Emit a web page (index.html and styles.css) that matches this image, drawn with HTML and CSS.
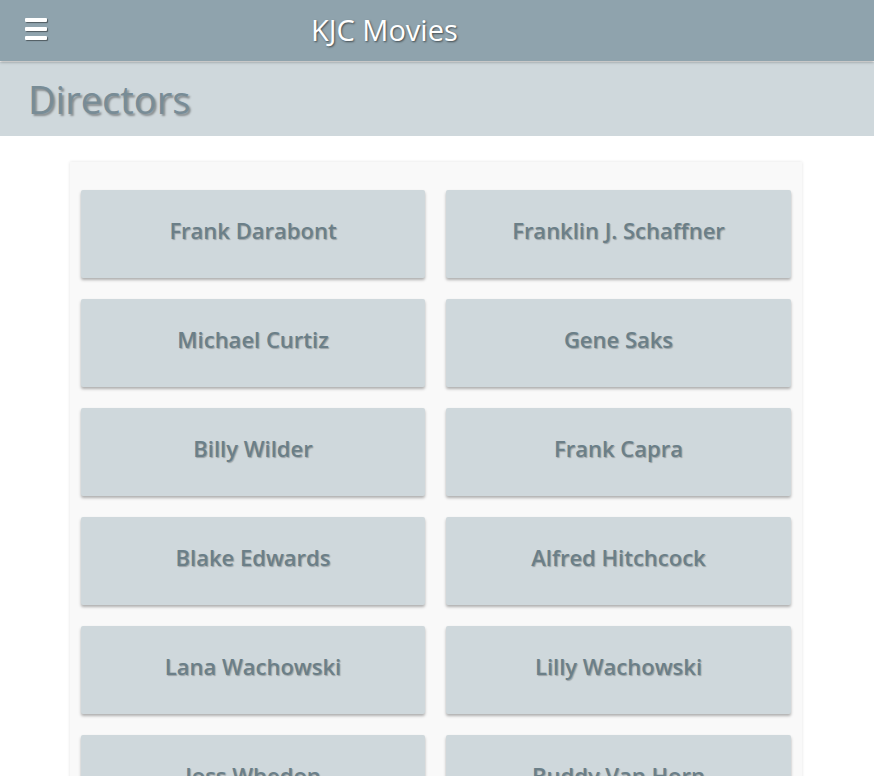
FILE: index.html
```html
<!DOCTYPE html>
<html lang="en">
<head>
<meta charset="utf-8">
<title>KJC Movies - Directors</title>
<link rel="stylesheet" href="styles.css">
</head>
<body>
<header class="topbar">
  <button class="menu" aria-label="Menu">
    <span class="bar"></span><span class="bar"></span><span class="bar"></span>
  </button>
  <div class="brand">KJC Movies</div>
</header>
<section class="subheader">
  <h1 class="page-title">Directors</h1>
</section>
<main class="panel">
  <div class="card">Frank Darabont</div>
  <div class="card">Franklin J. Schaffner</div>
  <div class="card">Michael Curtiz</div>
  <div class="card">Gene Saks</div>
  <div class="card">Billy Wilder</div>
  <div class="card">Frank Capra</div>
  <div class="card">Blake Edwards</div>
  <div class="card">Alfred Hitchcock</div>
  <div class="card">Lana Wachowski</div>
  <div class="card">Lilly Wachowski</div>
  <div class="card">Joss Whedon</div>
  <div class="card">Buddy Van Horn</div>
</main>
</body>
</html>
```
FILE: styles.css
```css
* { box-sizing: border-box; }
html, body { margin: 0; padding: 0; }
body {
  background: #ffffff;
  font-family: "Open Sans", "Noto Sans", sans-serif;
  overflow: hidden;
}
.topbar {
  height: 61px;
  background: #8fa3ad;
  display: flex;
  align-items: center;
  box-shadow: 0 1px 3px rgba(0,0,0,0.35);
  position: relative;
  z-index: 2;
}
.menu {
  border: 0;
  background: transparent;
  padding: 0;
  margin: 0 0 0 25px;
  width: 22px;
  height: 22px;
  display: flex;
  flex-direction: column;
  justify-content: space-between;
  align-self: flex-start;
  margin-top: 18px;
}
.bar {
  display: block;
  height: 4px;
  background: #ffffff;
  border-radius: 1px;
  box-shadow: 1px 1px 1px rgba(0,0,0,0.45);
}
.brand {
  margin-left: 264px;
  color: #ffffff;
  font-size: 29px;
  line-height: 1;
  margin-top: -3px;
  text-shadow: 1px 1px 2px rgba(0,0,0,0.55);
}
.subheader {
  height: 74px;
  margin-top: 1px;
  background: #cfd8dc;
  display: flex;
  align-items: center;
  padding-left: 28px;
}
.page-title {
  margin: 0;
  font-weight: 400;
  font-size: 38px;
  line-height: 1;
  color: #788c96;
  text-shadow: 2px 2px 2px rgba(0,0,0,0.35);
}
.panel {
  width: 732px;
  margin: 26px 0 0 70px;
  padding: 28px 11px;
  background: #f9f9f9;
  box-shadow: 0 0 3px rgba(0,0,0,0.12);
  display: grid;
  grid-template-columns: 344px 345px;
  column-gap: 21px;
  row-gap: 21px;
}
.card {
  height: 88px;
  background: #cfd8dc;
  border-radius: 2px;
  box-shadow: 0 2px 3px rgba(0,0,0,0.3);
  display: flex;
  align-items: center;
  justify-content: center;
  padding-bottom: 9px;
  color: #6b7f88;
  font-size: 22px;
  font-weight: 600;
  text-shadow: 1px 1px 1px rgba(0,0,0,0.25);
}
```
